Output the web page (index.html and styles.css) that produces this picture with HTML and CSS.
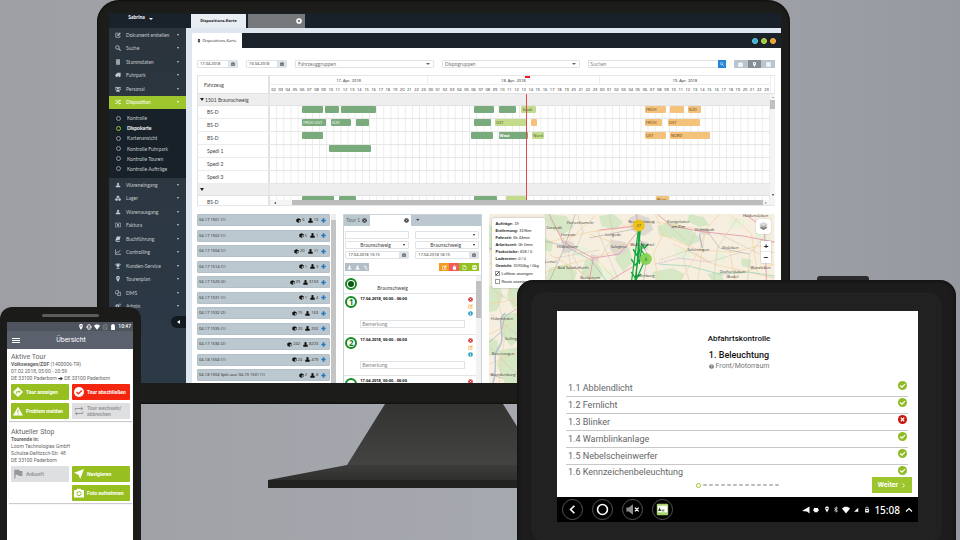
FILE: index.html
```html
<!DOCTYPE html>
<html lang="de">
<head>
<meta charset="utf-8">
<title>Dispositions-Karte</title>
<link rel="stylesheet" href="styles.css">
</head>
<body>
<svg class="defs" aria-hidden="true">
  <symbol id="edit" viewBox="0 0 16 16"><path d="M9 3H2v11h11V9" fill="none" stroke="currentColor" stroke-width="1.8"/><path d="M6 8l7-7 2.500 2.500-7 7H6z" fill="currentColor"/></symbol>
  <symbol id="search" viewBox="0 0 16 16"><circle cx="6.500" cy="6.500" r="4.700" fill="none" stroke="currentColor" stroke-width="2.200"/><path d="M10 10l5 5" stroke="currentColor" stroke-width="2.800"/></symbol>
  <symbol id="db" viewBox="0 0 16 16"><path d="M3 1h10v14H3z" fill="currentColor"/><path d="M4 4.500h8M4 8h8M4 11.500h8" stroke="#2c3640"/></symbol>
  <symbol id="truck" viewBox="0 0 16 16"><path d="M6 2h9v9H1V7l3-3h2z" fill="currentColor"/><circle cx="4.500" cy="12" r="2.200" fill="currentColor"/><circle cx="12" cy="12" r="2.200" fill="currentColor"/></symbol>
  <symbol id="users" viewBox="0 0 16 16"><g fill="currentColor"><circle cx="8" cy="5.500" r="3"/><circle cx="3" cy="4" r="2.200"/><circle cx="13" cy="4" r="2.200"/><path d="M3 15c0-8 10-8 10 0zM0 10c0-5 5-4 4 0zM16 10c0-5-5-4-4 0z"/></g></symbol>
  <symbol id="random" viewBox="0 0 16 16"><path d="M1 4h3l6 8h3M1 12h3l6-8h3" fill="none" stroke="currentColor" stroke-width="2.200"/><path d="M12 1l4 3-4 3zM12 9l4 3-4 3z" fill="currentColor"/></symbol>
  <symbol id="person" viewBox="0 0 16 16"><path d="M8 1l4 5h-2v4H6V6H4zM2 10h12v4H2z" fill="currentColor"/></symbol>
  <symbol id="weight" viewBox="0 0 16 16"><path d="M8 0a4 4 0 013 6v3h4v6H1V9h4V6a4 4 0 013-6z" fill="currentColor"/></symbol>
  <symbol id="cubes" viewBox="0 0 16 16"><path d="M8 1l4 2v4L8 9 4 7V3zM4 8l4 2v4l-4 2-4-2v-4zM12 8l4 2v4l-4 2-4-2v-4z" fill="currentColor" stroke="#2c3640" stroke-width=".8"/></symbol>
  <symbol id="money" viewBox="0 0 16 16"><path d="M1 3h14v10H1z" fill="none" stroke="currentColor" stroke-width="1.600"/><circle cx="8" cy="8" r="2.600" fill="currentColor"/></symbol>
  <symbol id="book" viewBox="0 0 16 16"><path d="M5 1h10l-3 10H4v2h9v2H3c-3-1-1-6 0-9z" fill="currentColor"/></symbol>
  <symbol id="chart" viewBox="0 0 16 16"><path d="M1 1v13h15M3 11l4-4 2 2 5-6" fill="none" stroke="currentColor" stroke-width="2"/></symbol>
  <symbol id="trophy" viewBox="0 0 16 16"><path d="M4 1h8v5c0 3-2 4-3 4v3h3v2H4v-2h3v-3C6 10 4 9 4 6z" fill="currentColor"/><path d="M4 3H1c0 3 1 4 4 5M12 3h3c0 3-1 4-4 5" fill="none" stroke="currentColor" stroke-width="1.300"/></symbol>
  <symbol id="pin" viewBox="0 0 16 16"><path d="M8 0c7 0 6 7 0 16C2 7 1 0 8 0zm0 3a2 2 0 100 4 2 2 0 000-4z" fill="currentColor"/></symbol>
  <symbol id="copy" viewBox="0 0 16 16"><path d="M1 4l3-3h5v9H1zM9 6h6v9H7v-5" fill="none" stroke="currentColor" stroke-width="1.700"/></symbol>
  <symbol id="cogs" viewBox="0 0 16 16"><circle cx="6" cy="8" r="3.500" fill="none" stroke="currentColor" stroke-width="3"/><circle cx="13" cy="4" r="2" fill="none" stroke="currentColor" stroke-width="1.600"/><circle cx="13" cy="12" r="2" fill="none" stroke="currentColor" stroke-width="1.600"/></symbol>
  <symbol id="cal" viewBox="0 0 16 16"><path d="M1 3h3V1h2v2h4V1h2v2h3v12H1z" fill="currentColor"/><path d="M3 7h10M3 10h10M6 6v8M10 6v8" stroke="#dde3e8"/></symbol>
  <symbol id="list" viewBox="0 0 16 16"><path d="M1 1h14v14H1z" fill="currentColor"/><path d="M3 6h10M3 10h10" stroke="#b9c5ce"/></symbol>
  <symbol id="box" viewBox="0 0 16 16"><path d="M8 1l7 3v8l-7 3-7-3V4z" fill="currentColor"/><path d="M9 8l5-2v5l-5 2z" fill="#bcc8d0"/></symbol>
  <symbol id="plus" viewBox="0 0 16 16"><path d="M8 1v14M1 8h14" stroke="currentColor" stroke-width="5"/></symbol>
  <symbol id="ring-x" viewBox="0 0 16 16"><circle cx="8" cy="8" r="7.500" fill="currentColor"/><path d="M5.500 5.500l5 5M10.500 5.500l-5 5" stroke="var(--hole, #fff)" stroke-width="3.200"/></symbol>
  <symbol id="info" viewBox="0 0 16 16"><circle cx="8" cy="8" r="7.500" fill="currentColor"/><path d="M8 3v2M8 7v6" stroke="#fff" stroke-width="2.400"/></symbol>
  <symbol id="help" viewBox="0 0 16 16"><circle cx="8" cy="8" r="7.500" fill="currentColor"/><path d="M5.500 6c0-3 5-3 5 0 0 2-2.500 1.500-2.500 4M8 11v2" fill="none" stroke="#fff" stroke-width="1.800"/></symbol>
  <symbol id="link" viewBox="0 0 16 16"><path d="M2 6l4-4 4 4-2 2M6 8l2-2 6 6-3 3-4-4" fill="none" stroke="currentColor" stroke-width="2.200"/></symbol>
  <symbol id="trash" viewBox="0 0 16 16"><path d="M2 3h4l1-2h2l1 2h4v2H2zM3 6h10v9H3z" fill="currentColor"/></symbol>
  <symbol id="file" viewBox="0 0 16 16"><path d="M3 1h6l4 4v10H3z" fill="none" stroke="currentColor" stroke-width="2"/><path d="M8 1v5h5" fill="currentColor"/></symbol>
  <symbol id="save" viewBox="0 0 16 16"><path d="M2 2h12v12H2z" fill="none" stroke="currentColor" stroke-width="2.400"/><path d="M5 2h6v4H5zM4 9h8v5H4z" fill="currentColor"/></symbol>
  <symbol id="ok" viewBox="0 0 16 16"><circle cx="8" cy="8" r="8" fill="currentColor"/><path d="M4 8l3 3 5.500-5.500" fill="none" stroke="#fff" stroke-width="2.200"/></symbol>
  <symbol id="bad" viewBox="0 0 16 16"><circle cx="8" cy="8" r="8" fill="currentColor"/><path d="M5 5l6 6M11 5l-6 6" stroke="#fff" stroke-width="2.200"/></symbol>
  <symbol id="wifi" viewBox="0 0 16 16"><path d="M0 5c4-5 12-5 16 0l-8 10z" fill="currentColor"/></symbol>
  <symbol id="signal" viewBox="0 0 16 16"><path d="M14 3v11H3z" fill="currentColor"/></symbol>
  <symbol id="nosim" viewBox="0 0 16 16"><path d="M3 5l4-3h6v12H3zM3 3l11 12" fill="none" stroke="currentColor" stroke-width="1.400"/></symbol>
  <symbol id="battery" viewBox="0 0 16 16"><path d="M6 0h4v2h3v14H3V2h3z" fill="currentColor"/></symbol>
  <symbol id="vibrate" viewBox="0 0 16 16"><path d="M5 2h6v12H5z" fill="none" stroke="currentColor" stroke-width="2"/><path d="M4 4L0 8l4 4zM12 4l4 4-4 4z" fill="currentColor"/></symbol>
  <symbol id="bt" viewBox="0 0 16 16"><path d="M3 4l9 8-4 3V1l4 3-9 8" fill="none" stroke="currentColor" stroke-width="1.800"/></symbol>
  <symbol id="lock" viewBox="0 0 16 16"><path d="M3 7h10v9H3z" fill="currentColor"/><path d="M5 7V2h6v5" fill="none" stroke="currentColor" stroke-width="1.600"/><path d="M6 9h4v3H6z" fill="#000"/></symbol>
  <symbol id="nav" viewBox="0 0 16 16"><path d="M16 0L10 16 7 9 0 6z" fill="currentColor"/></symbol>
  <symbol id="plane" viewBox="0 0 16 16"><path d="M15 1v14l-5-4-10-1z" fill="currentColor"/></symbol>
  <symbol id="android" viewBox="0 0 16 16"><path d="M3 3l2 1h6l2-1 1 4h1v5h-2l-1 3H4l-1-3H1V7h1z" fill="currentColor"/></symbol>
  <symbol id="turn" viewBox="0 0 16 16"><path d="M8 0l8 8-8 8-8-8z" fill="currentColor"/><path d="M6 11V7.500h4" fill="none" stroke="#97bf1f" stroke-width="1.600"/><path d="M9.500 5l3 2.500-3 2.500z" fill="#97bf1f"/></symbol>
  <symbol id="check" viewBox="0 0 16 16"><circle cx="8" cy="8" r="8" fill="currentColor"/><path d="M4 8l3 3 5.500-5.500" fill="none" stroke="#f5260f" stroke-width="2"/></symbol>
  <symbol id="warn" viewBox="0 0 16 16"><path d="M8 1l8 14H0z" fill="currentColor"/><path d="M8 6v4M8 11.500v1.800" stroke="#97bf1f" stroke-width="1.600"/></symbol>
  <symbol id="swap" viewBox="0 0 16 16"><path d="M2 7V4h10M14 9v3H4" fill="none" stroke="currentColor" stroke-width="1.500"/><path d="M11 1l4 3-4 3zM5 9l-4 3 4 3z" fill="currentColor"/></symbol>
  <symbol id="flag" viewBox="0 0 16 16"><path d="M2 1h8l1 2h4v8H9l-1-2H4v6H2z" fill="currentColor"/></symbol>
  <symbol id="camera" viewBox="0 0 16 16"><path d="M5 1h6l1 2h3l1 1v11H0V4l1-1h3z" fill="currentColor"/><circle cx="8" cy="9" r="3.300" fill="none" stroke="#97bf1f" stroke-width="1.500"/></symbol>
</svg>

<main class="stage">
  <svg class="stand" viewBox="0 0 360 86" aria-hidden="true">
    <defs>
      <linearGradient id="neck" x1="0" y1="0" x2="0" y2="1"><stop offset="0" stop-color="#333332"/><stop offset="1" stop-color="#434341"/></linearGradient>
      <linearGradient id="foot" x1="0" y1="0" x2="0" y2="1"><stop offset="0" stop-color="#3c3c3a"/><stop offset="1" stop-color="#2f2f2e"/></linearGradient>
    </defs>
    <path d="M117 0h118l38 61H79z" fill="url(#neck)"/>
    <path d="M79 61h194l79 15H0z" fill="url(#foot)"/>
    <path d="M0 76h352v8H0z" fill="#222221"/>
  </svg>

  <section class="monitor" aria-label="Disposition">
    <div class="desk">
      <aside class="side">
        <button class="user">Sabrina <i class="caret"></i></button>
        <ul class="menu" id="menu"></ul>
        <div class="collapse-row"><button class="collapse" aria-label="Menü einklappen"><i></i></button></div>
      </aside>
      <div class="work">
        <header class="tabs">
          <a class="tab on" href="#karte">Dispositions-Karte</a>
          <a class="tab" href="#neu" aria-label="Tab"><svg><use href="#ring-x"/></svg></a>
        </header>
        <div class="frame">
          <div class="subbar">
            <a class="subtab" href="#karte"><svg><use href="#pin"/></svg>Dispositions-Karte</a>
            <span class="dots"><i class="blue"></i><i class="lime"></i><i class="amber"></i></span>
          </div>
          <div class="content">
            <form class="filters">
              <span class="date"><input value="17.04.2018" aria-label="Von"><button type="button" aria-label="Kalender"><svg><use href="#cal"/></svg></button></span>
              <span class="date"><input value="19.04.2018" aria-label="Bis"><button type="button" aria-label="Kalender"><svg><use href="#cal"/></svg></button></span>
              <span class="pick"><select aria-label="Fahrzeuggruppen"><option>Fahrzeuggruppen</option></select></span>
              <span class="pick"><select aria-label="Dispogruppen"><option>Dispogruppen</option></select></span>
              <span class="find"><input placeholder="Suchen" aria-label="Suchen"><button type="button" aria-label="Suche starten"><svg><use href="#search"/></svg></button></span>
              <span class="views"><button type="button" aria-label="Kalender"><svg><use href="#cal"/></svg></button><button type="button" class="on" aria-label="Karte"><svg><use href="#pin"/></svg></button><button type="button" aria-label="Liste"><svg><use href="#list"/></svg></button></span>
            </form>

            <section class="gantt" id="gantt">
              <div class="g-head">
                <span class="g-name">Fahrzeug</span>
                <div class="g-time">
                  <div class="days"><span>17. Apr. 2018</span><span>18. Apr. 2018</span><span>19. Apr. 2018</span></div>
                  <div class="hours" id="hours"></div>
                </div>
                <span class="g-edge"></span>
              </div>
              <div class="g-body">
                <div class="g-rows" id="rows"></div>
                <div class="g-scroll"><i class="up"></i><b></b><i class="down"></i></div>
              </div>
              <div class="now-layer"><i class="now" id="now"></i></div>
              <div class="h-scroll"><i></i><b></b><i class="r"></i></div>
            </section>

            <div class="panels">
              <section class="orders"><ul id="orders"></ul><div class="v-scroll"></div></section>

              <section class="tour">
                <div class="t-tabs"><span>Tour 1 <svg><use href="#ring-x"/></svg></span><span class="on"><svg><use href="#ring-x"/></svg></span><button aria-label="Tour hinzufügen">+</button></div>
                <form class="t-form">
                  <input aria-label="Fahrer"><span class="pick dark"><select aria-label="Fahrzeug"><option></option></select></span>
                  <span class="pick dark mid"><select aria-label="Start"><option>Braunschweig</option></select></span>
                  <span class="pick dark mid"><select aria-label="Ziel"><option>Braunschweig</option></select></span>
                  <span class="date"><input value="17.04.2018 10:15" aria-label="Beginn"><button type="button" aria-label="Kalender"><svg><use href="#cal"/></svg></button></span>
                  <span class="date"><input value="17.04.2018 18:15" aria-label="Ende"><button type="button" aria-label="Kalender"><svg><use href="#cal"/></svg></button></span>
                </form>
                <div class="t-tools">
                  <span class="grp grey"><button aria-label="Laden"><svg><use href="#person"/></svg></button><button aria-label="Entladen"><svg><use href="#person"/></svg></button><button aria-label="Verknüpfen"><svg><use href="#link"/></svg></button></span>
                  <span class="grp"><button class="c1" aria-label="Bearbeiten"><svg><use href="#edit"/></svg></button><button class="c2" aria-label="Löschen"><svg><use href="#trash"/></svg></button><button class="c3" aria-label="Neu"><svg><use href="#file"/></svg></button><button class="c3" aria-label="Speichern"><svg><use href="#save"/></svg></button></span>
                </div>
                <div class="t-list">
                  <div class="stops">
                    <div class="stop first"><i class="num"></i><p>Braunschweig</p></div>
                    <div class="stop"><i class="num">1</i><div class="s-main"><b>17.04.2018, 00:00 - 06:00</b><input placeholder="Bemerkung" aria-label="Bemerkung 1"></div><div class="acts"><svg class="red"><use href="#ring-x"/></svg><svg class="org"><use href="#edit"/></svg><svg class="blu"><use href="#info"/></svg></div></div>
                    <div class="stop"><i class="num">2</i><div class="s-main"><b>17.04.2018, 00:00 - 06:00</b><input placeholder="Bemerkung" aria-label="Bemerkung 2"></div><div class="acts"><svg class="red"><use href="#ring-x"/></svg><svg class="org"><use href="#edit"/></svg><svg class="blu"><use href="#info"/></svg></div></div>
                    <div class="stop"><i class="num"></i><div class="s-main"><b>17.04.2018, 00:00 - 06:00</b></div><div class="acts"><svg class="red"><use href="#ring-x"/></svg></div></div>
                  </div>
                  <div class="s-scroll"><i></i><b></b></div>
                </div>
              </section>

              <section class="map">
                <svg class="land" viewBox="0 0 285 169" preserveAspectRatio="xMinYMin slice">
                  <rect width="285" height="169" fill="#f6efe0"/>
                  <g fill="#d5e7c4">
                    <path d="M55 0l22 2 8 10-10 8-16-6zM110 2l14-2 10 8-8 8-14-4zM168 12l14-4 20 8 10 10-12 6-16-8-14-2zM128 32l12 2 4 14-10 10-8-12zM60 54l18-4 10 8-4 12H56zM96 46l12 2 8 14-14 6-10-8zM200 0l14 3 6 8-10 2-12-6zM163 58l20-4 12 6-4 8h-24zM0 72l10-2 4 12-6 14-8 2zM20 70l14 4v14l-10 6-6-12zM14 100l20-2v24l-12 10-10-12zM0 124l8 2 4 12-12 4zM12 136l22-4v37H16l-8-18zM0 10l5 4v20l-5 4zM56 24l8 4-2 10-8-2zM252 44l10 2-2 8-8-2zM218 60l14-2 2 8h-12z"/>
                  </g>
                  <g fill="#e8f1d9"><path d="M84 30l14 4-4 10-12-4zM186 34l16 2-2 10-14-2zM240 4l16 2-4 8-12-2zM112 54l16 4 2 10h-16zM264 14l14 2 4 14-14-2zM226 38l10 2v8l-10-2z"/></g>
                  <g fill="#ddd8d2"><path d="M140 4l8-4 12 4 4 12-10 6-12-6zM122 26l14 2 2 10-12 4-6-8zM72 26l12 2 2 8-12 4zM210 14l10 1v6l-10-1zM148 26l10 2v8l-10-2zM102 40l8 2-1 6-8-1z"/></g>
                  <g fill="none" stroke="#f5d3a0" stroke-width=".7">
                    <path d="M0 50l60-22 40-10 50-6M76 30l30-28M60 40l50 28M108 46l20 22M100 20l28 10 30 2M166 0l8 20-10 20 6 28M170 20l40 16 34 2 41-10M190 68l20-32 6-20 14-16M216 16l-8 52M240 36l6 32M245 60l40-10M132 12l34-4 50 8M240 0l22 20 6 40M184 30l40 20 61 14M52 60l28-10 24-6 30-10M0 90l34-6M0 120l34-16M10 169l6-50-8-40M0 150l34-14M20 70l10 40"/>
                  </g>
                  <g fill="none" stroke="#d3c3b5" stroke-width=".5">
                    <path d="M60 4l18 26 6 38M88 0l6 18-10 24 12 26M120 0l4 22-12 20M170 46l30-10 20 12 32-10M200 68l-6-24 14-30M224 68l4-34 20-30M258 68l2-28 20-24M176 8l20 18M108 16l22 52M66 44l44-8M230 20l40 20 15-2M4 76l26 16M2 100l28 22M0 132l30 30"/>
                  </g>
                  <g fill="none" stroke="#e79aae" stroke-width=".9">
                    <path d="M60 0l14 28 30 16 26-4 20-24M168 0l14 12 34 6 38 4 31 6M104 44l-4 24M147 0l2 14M255 0l20 14 2 54M0 34l5 2M110 16l38-4M118 68l30-18 6-20"/>
                  </g>
                  <g fill="none" stroke="#9b9ba3" stroke-width=".5">
                    <path d="M52 26l24 6 26 14 16 22M100 24l50-10M148 20l10 20-4 28M216 14l14 20 30 6M60 68l16-36 10-32M0 128l12-10 4-16 16-10M0 160l14 4"/>
                  </g>
                  <path d="M170 50l30 2 30 8 30-2 25 4" fill="none" stroke="#9fd4bd" stroke-width=".8"/>
                  <path d="M166 50l24-6 30 4" fill="none" stroke="#d792d8" stroke-width=".6" stroke-dasharray="2 1"/>
                  <path d="M4 169c6-20-2-26 6-36s-4-26 6-34M210 20l3 14" fill="none" stroke="#b4bfd8" stroke-width="1.500"/>
                  <g fill="none" stroke="#0fa83c" stroke-width="1.200">
                    <path d="M149 17l-8 60M150 17l-4 60M151 17l-6 60M151 32l-7 45M156 45l-14 32M153 30l-3 20M152 36l6 9"/>
                    <path d="M144 35l3 6 4-6M142 45l4 6 5-6M152 29l3 5 4-4M142 58l4 6 6-4" stroke-width="1.400"/>
                  </g>
                  <g class="places">
                    <text x="91" y="10">Hohenhameln</text><text x="65" y="15">Sarstedt</text><text x="79" y="22">Harsum</text><text x="124" y="22">Lengede</text><text x="78" y="34">Hildesheim</text><text x="130" y="34">Salzgitter</text><text x="61" y="49">(Leine)</text><text x="84" y="55">Bad Salzdetfurth</text><text x="101" y="65">Bockenem</text><text x="152" y="9">Braunschweig</text><text x="189" y="9">Königslutter</text><text x="189" y="14">am Elm</text><text x="215" y="17">Helmstedt</text><text x="209" y="37">Schöningen</text><text x="241" y="35">Eilsleben</text><text x="243" y="59">Oschersleben</text><text x="243" y="64">(Bode)</text><text x="271" y="55">Wanzleben</text><text x="266" y="3">Haldensleben</text><text x="153" y="32">Wolfenbüttel</text><text x="156" y="63">Hornburg</text><text x="13" y="106">Holzminden</text><text x="22" y="126">Solling</text><text x="14" y="141">Beverungen</text><text x="14" y="162">Brandenburg</text>
                  </g>
                  <circle cx="149.500" cy="11.500" r="6" fill="#f0c20c" opacity=".9"/>
                  <circle cx="156.500" cy="45" r="6" fill="#7fd14d" opacity=".9"/>
                  <g class="places n"><text x="149.500" y="13">27</text><text x="156.500" y="46.500">3</text></g>
                </svg>
                <div class="info">
                  <p><b>Aufträge:</b> 19</p><p><b>Entfernung:</b> 319km</p><p><b>Fahrzeit:</b> 6h 44min</p><p><b>Arbeitszeit:</b> 0h 0min</p><p><b>Packstücke:</b> 658 / 0</p><p><b>Lademeter:</b> 0 / 0</p><p><b>Gewicht:</b> 31950kg / 0kg</p>
                  <label><input type="checkbox" checked>Luftlinie anzeigen</label>
                  <label><input type="checkbox">Route anzeigen</label>
                </div>
                <div class="ctrl">
                  <button class="layers" aria-label="Ebenen"><svg viewBox="0 0 16 16"><path d="M8 7l7 3-7 4-7-4z" fill="#777"/><path d="M8 4l7 3-7 4-7-4z" fill="#aaa"/><path d="M8 1l7 3-7 4-7-4z" fill="#ddd" stroke="#999" stroke-width=".5"/></svg></button>
                  <span class="zoom"><button>+</button><button>−</button></span>
                </div>
              </section>
            </div>
          </div>
        </div>
      </div>
    </div>
  </section>

  <section class="phone" aria-label="Übersicht">
    <i class="speaker"></i>
    <div class="p-screen">
      <div class="p-status"><svg><use href="#pin"/></svg><svg><use href="#vibrate"/></svg><svg><use href="#wifi"/></svg><svg class="dim"><use href="#nosim"/></svg><svg><use href="#battery"/></svg><b>10:47</b></div>
      <header class="p-bar"><button aria-label="Menü"><i></i><i></i><i></i></button><h1>Übersicht</h1></header>
      <article class="card">
        <h2>Aktive Tour</h2>
        <p><b>Volkswagen/ZDF</b> (1400006-TR)</p><p>07.02 2018, 05:00 - 20:59</p><p>DE 33100 Paderborn <svg class="arrow" viewBox="0 0 16 16"><path d="M1 6h7V2l8 6-8 6v-4H1z" fill="#333"/></svg> DE 33100 Paderborn</p>
        <div class="btns">
          <button><svg><use href="#turn"/></svg>Tour anzeigen</button>
          <button class="stopb"><svg><use href="#check"/></svg>Tour abschließen</button>
          <button><svg><use href="#warn"/></svg>Problem melden</button>
          <button class="off"><svg><use href="#swap"/></svg>Tour wechseln/<br>abbrechen</button>
        </div>
      </article>
      <article class="card">
        <h2>Aktueller Stop</h2>
        <p><b>Tourende in:</b></p><p>Loom Technologies GmbH</p><p>Schulze-Delitzsch-Str. 48</p><p>DE 33100 Paderborn</p>
        <div class="btns">
          <button class="off"><svg><use href="#flag"/></svg>Ankunft</button>
          <button><svg><use href="#nav"/></svg>Navigieren</button>
          <button class="second"><svg><use href="#camera"/></svg>Foto aufnehmen</button>
        </div>
      </article>
    </div>
  </section>

  <section class="tablet" aria-label="Abfahrtskontrolle">
    <i class="knob"></i>
    <div class="shell">
      <div class="t-screen">
        <div class="page">
          <h2>Abfahrtskontrolle</h2>
          <h3>1. Beleuchtung</h3>
          <p class="where"><svg><use href="#help"/></svg>Front/Motorraum</p>
          <ul class="checks">
            <li>1.1 Abblendlicht<svg><use href="#ok"/></svg></li>
            <li>1.2 Fernlicht<svg><use href="#ok"/></svg></li>
            <li>1.3 Blinker<svg class="no"><use href="#bad"/></svg></li>
            <li>1.4 Warnblinkanlage<svg><use href="#ok"/></svg></li>
            <li>1.5 Nebelscheinwerfer<svg><use href="#ok"/></svg></li>
            <li>1.6 Kennzeichenbeleuchtung<svg><use href="#ok"/></svg></li>
          </ul>
          <footer class="next">
            <span class="steps" id="steps"></span>
            <button>Weiter <svg viewBox="0 0 8 8"><path d="M2.500 1l3 3-3 3" fill="none" stroke="currentColor" stroke-width="1.400"/></svg></button>
          </footer>
        </div>
        <nav class="sys">
          <button aria-label="Zurück"><svg viewBox="0 0 20 20"><path d="M12 6l-4 4 4 4" fill="none" stroke="#fff" stroke-width="1.700"/></svg></button>
          <button aria-label="Startseite"><svg viewBox="0 0 20 20"><circle cx="10" cy="10" r="5.200" fill="none" stroke="#fff" stroke-width="1.700"/></svg></button>
          <button aria-label="Stumm"><svg viewBox="0 0 20 20"><path d="M3.500 8H6l4.500-3.500v11L6 12H3.500z" fill="#8c8c8c"/><path d="M12.500 8l4 4M16.500 8l-4 4" stroke="#fff" stroke-width="1.400"/></svg></button>
          <button aria-label="App"><svg viewBox="0 0 20 20"><rect x="4" y="4" width="12" height="12" rx="1" fill="#a8d06a"/><path d="M5 6h10v7H5z" fill="#fff"/><path d="M5.500 11.500l1.500-4 1.500 4z" fill="#333"/><path d="M9 10h3v2H9z" fill="#7a9a5a"/></svg></button>
          <span class="tray"><svg class="big"><use href="#plane"/></svg><svg class="gap"><use href="#android"/></svg><svg><use href="#pin"/></svg><svg><use href="#bt"/></svg><svg class="big"><use href="#wifi"/></svg><svg class="gap"><use href="#signal"/></svg><svg><use href="#lock"/></svg><time>15:08</time><svg class="big" viewBox="0 0 8 8"><path d="M1 5.500l3-3 3 3" fill="none" stroke="#fff" stroke-width="1.200"/></svg></span>
        </nav>
      </div>
    </div>
  </section>
</main>
<script src="app.js"></script>
</body>
</html>
```
FILE: styles.css
```css
* { box-sizing: border-box; }
html, body { height: 100%; }
body { margin: 0; overflow: hidden; font-family: "Open Sans", "Noto Sans", sans-serif; font-size: 4px; line-height: 6px; color: #222; }
ul, p, h1, h2, h3 { margin: 0; padding: 0; list-style: none; font-weight: 400; }
button, input, select { font: inherit; color: inherit; margin: 0; padding: 0; border: 0; background: none; border-radius: 0; min-width: 0; outline: 0; }
button { display: flex; align-items: center; justify-content: center; }
a { color: inherit; text-decoration: none; }
i { font-style: normal; }
svg { display: block; width: 6px; height: 6px; flex: none; }
.defs { position: absolute; width: 0; height: 0; }

/* devices on the backdrop */
.stage { position: relative; height: 100%; overflow: hidden; background: linear-gradient(90deg, #9d9fa4, #a6a9af 55%, #96999f); }
.stand { position: absolute; left: 268px; top: 404px; width: 360px; height: 86px; }
.monitor { position: absolute; left: 97px; right: 170px; top: 0; height: 404px; padding: 13px 9px 21px 12px; background: #1c1c1b; border-radius: 22px; box-shadow: inset 0 0 3px #000; }
.phone { position: absolute; left: 0; top: 307px; bottom: -20px; width: 141px; padding: 7px 8px 0 7px; background: #1b1b1a; border-radius: 12px; }
.tablet { position: absolute; left: 517px; right: 4px; top: 280px; bottom: -20px; }

/* desktop app */
.desk { height: 100%; display: flex; overflow: hidden; background: #fff; }
.side { width: 77px; flex: none; background: linear-gradient(#2b343d, #2c3a47); color: #c3c8cc; font: 5px/6px Lato, sans-serif; font-weight: 700; }
.user { width: 100%; height: 15px; padding-bottom: 8px; background: #19222b; color: #fff; font-weight: 700; gap: 4px; padding-right: 14px; }
.caret { border: 2px solid transparent; border-top-color: currentColor; border-bottom: 0; margin-top: 4px; }
.menu { height: 285px; display: flex; flex-direction: column; }
.menu > li { flex: 1; display: flex; }
.menu a { flex: 1; display: flex; align-items: center; gap: 5px; padding: 0 7px 0 6px; }
.menu > li > a::after { content: ""; margin-left: auto; border: 1px solid transparent; border-top: 2px solid currentColor; border-bottom: 0; }
.menu .cur { background: #9dc62d; color: #fff; }
.menu > .sub { flex: none; height: 69px; background: #18212a; padding: 4px 0; display: block; }
.sub ul { height: 61px; display: flex; flex-direction: column; font-weight: 400; }
.sub li { flex: 1; display: flex; }
.sub li::before { content: ""; border: 1px solid #8d959b; border-radius: 50%; width: 3px; height: 3px; align-self: center; margin-left: 7px; }
.sub .sel { color: #fff; font-weight: 700; }
.sub .sel::before { border-color: #9dc62d; }
.collapse-row { display: flex; justify-content: flex-end; padding-top: 3px; }
.collapse { width: 15px; height: 12px; border-radius: 6px 0 0 6px; background: #12191f; }
.collapse i { border: 2px solid transparent; border-right: 3px solid #fff; border-left: 0; }

.work { flex: 1; min-width: 0; display: flex; flex-direction: column; background: #dfe6ef; }
.tabs { height: 15px; flex: none; display: flex; gap: 2px; padding: 1px 0 0 5px; background: #18212a; --hole: #76787c; }
.tab { width: 57px; display: flex; align-items: center; justify-content: flex-end; background: #76787c; color: #fff; padding-right: 3px; }
.tab.on { width: 55px; justify-content: center; background: #e9eef5; color: #222; font-weight: 700; padding: 0; }
.frame { flex: 1; min-height: 0; display: flex; flex-direction: column; margin: 5px 0 0 6px; background: #fff; }
.subbar { height: 15px; flex: none; display: flex; background: #1b2229; justify-content: space-between; align-items: stretch; }
.subtab { width: 50px; display: flex; align-items: center; justify-content: center; background: #fff; color: #222; gap: 1px; }
.subtab svg { width: 4px; height: 4px; }
.dots { display: flex; align-items: center; gap: 3px; padding-right: 5px; }
.dots i { width: 6px; height: 6px; border-radius: 50%; background: #32afd3; border: 1px solid #6fd0ea; }
.dots .lime { background: #9dc62d; border-color: #c5e26d; }
.dots .amber { background: #f39c1f; border-color: #f8bd57; }
.content { flex: 1; min-height: 0; display: flex; flex-direction: column; padding: 12px 6px 0 5px; }

.filters { display: flex; gap: 8px; height: 8px; flex: none; margin-bottom: 7px; }
.date { display: flex; width: 41px; border: 1px solid #dfe3e6; border-radius: 1px; }
.date input { flex: 1; padding-left: 2px; color: #222; }
.date button { width: 9px; background: #dde3e8; color: #4b5258; }
.date svg { width: 4px; height: 4px; }
.pick { flex: 1; display: flex; align-items: center; border: 1px solid #dfe3e6; border-radius: 1px; min-width: 0; }
.pick select { flex: 1; appearance: none; padding-left: 2px; color: #777; height: 100%; }
.pick select, .find input, .s-main input, .stop.first p { font: 5px/6px Lato, sans-serif; }
.pick::after { content: ""; border: 2px solid transparent; border-top-color: #666; border-bottom: 0; margin-right: 3px; }
.pick.dark::after { border-width: 1px; border-top: 2px solid #222; }
.pick.dark select { color: #444; }
.find { flex: 1; display: flex; border: 1px solid #dfe3e6; border-right: 0; }
.find input { flex: 1; padding-left: 1px; }
.find button { width: 8px; background: #2584d8; color: #fff; margin: -1px 0; }
.find svg { width: 4px; height: 4px; }
::placeholder { color: #888; opacity: 1; }
.views { width: 41px; display: flex; }
.views button { flex: 1; background: #b9c5ce; color: #fff; }
.views .on { background: #848e96; }
.views svg { width: 5px; height: 5px; }

.gantt { position: relative; height: 131px; flex: none; display: flex; flex-direction: column; border: 1px solid #e6e6e6; border-width: 1px 0; margin-bottom: 8px; }
.g-head { display: flex; height: 18px; border-bottom: 1px solid #e2e2e2; }
.g-name { width: 73px; flex: none; border: 1px solid #e2e2e2; border-width: 0 2px 0 1px; display: flex; align-items: center; padding-left: 6px; font: 5px/6px Lato, sans-serif; color: #444; }
.g-time { flex: 1; min-width: 0; }
.days { display: grid; grid-template-columns: 22fr 24fr 24fr; height: 9px; text-align: center; border-bottom: 1px solid #eee; line-height: 9px; }
.days span + span { border-left: 1px solid #eee; }
.hours { display: grid; grid-template-columns: repeat(70, minmax(0, 1fr)); line-height: 9px; }
.hours span { display: flex; justify-content: center; }
.g-edge { width: 5px; border: 1px solid #eee; border-width: 0 1px; }
.g-body { flex: 1; min-height: 0; display: flex; overflow: hidden; }
.g-rows { flex: 1; min-width: 0; }
.g-row { display: flex; height: 13px; }
.g-row .g-name { padding-left: 9px; border-bottom: 1px solid #ececec; }
.g-row.group { height: 12px; background: #eee; border-bottom: 1px solid #e2e2e2; }
.g-row.group .g-name { padding-left: 2px; border-color: #e6e6e6; border-bottom: 0; gap: 1px; }
.g-name i { border: 2px solid transparent; border-top: 3px solid #222; border-bottom: 0; }
.track { position: relative; flex: 1; border-bottom: 1px solid #e6e6e6; background: linear-gradient(90deg, transparent calc(100% - 1px), #ebebeb 0) 0 0 / calc(100% / 70) 100%; }
.group .track { background: none; border: 0; }
.bar { position: absolute; top: 0; height: 7px; border-radius: 1px; background: #7aab7c; color: #fff; line-height: 7px; padding-left: 1px; white-space: nowrap; }
.bar.l { background: #c3dc8c; color: #47552c; }
.bar.o { background: #f4c27a; color: #553d1a; }
.bar.w { font-weight: 700; }
.g-scroll { width: 5px; flex: none; display: flex; flex-direction: column; align-items: center; background: #f4f4f4; padding: 2px 0 8px; }
.g-scroll b { width: 5px; height: 9px; background: #c1c1c1; margin-top: 2px; }
.g-scroll i { border: 1px solid transparent; }
.g-scroll .up { border-bottom-color: #777; }
.g-scroll .down { border-top: 2px solid #333; margin-top: auto; }
.h-scroll { position: absolute; left: 73px; right: 5px; bottom: 0; height: 5px; display: flex; align-items: center; background: #f4f4f4; padding: 0 3px; }
.h-scroll b { flex: 1; height: 5px; margin: 0 2px 0 16px; background: #bdbdbd; }
.h-scroll i { border: 1px solid transparent; border-right: 2px solid #333; }
.h-scroll .r { border-right: 0; border-left: 2px solid #999; }
.now-layer { position: absolute; inset: 0 5px 5px 73px; pointer-events: none; }
.now { position: absolute; top: 18px; bottom: 0; width: 1px; background: #e04a4a; }
.now::before { content: ""; position: absolute; left: -1px; top: -18px; border: 2px solid #f01818; border-width: 2px 1px 0; width: 3px; }

.panels { flex: 1; min-height: 0; display: grid; grid-template-columns: 139fr 139fr 285fr; grid-template-rows: minmax(0, 1fr); gap: 7px; }
.orders { display: flex; gap: 1px; min-width: 0; }
.orders ul { flex: 1; display: flex; flex-direction: column; justify-content: space-between; padding-bottom: 2px; }
.orders li { height: 12px; display: flex; align-items: center; padding: 0 3px 0 1px; background: #bcc8d0; border-radius: 1px; border: 1px solid #b3c0c9; }
.orders li span { display: flex; align-items: center; gap: 1px; margin-left: 3px; }
.orders li span:first-of-type { margin-left: auto; }
.orders svg { width: 5px; height: 5px; color: #111; }
.orders li > svg { margin-left: 3px; color: #2277be; }
.v-scroll { width: 5px; background: #c4c4c4; border-top: 6px solid #eee; }

.tour { display: flex; flex-direction: column; border: 1px solid #ccd4da; border-bottom: 0; min-width: 0; overflow: hidden; }
.t-tabs { display: flex; height: 12px; flex: none; background: #bcc8d0; margin: -1px -1px 0; --hole: #bcc8d0; }
.t-tabs span { width: 27px; display: flex; align-items: center; justify-content: center; gap: 2px; font: 5px/6px Lato, sans-serif; color: #666; }
.t-tabs svg { width: 5px; height: 5px; color: #444; }
.t-tabs .on { width: 41px; background: #fff; justify-content: flex-end; padding-right: 2px; }
.t-tabs button { width: 13px; font-size: 6px; font-weight: 700; }
.t-form { display: grid; grid-template-columns: minmax(0, 1fr) minmax(0, 1fr); grid-auto-rows: 8px; gap: 2px 6px; padding: 5px 2px 0 1px; }
.t-form > input { border: 1px solid #dfe3e6; }
.t-form .date { width: auto; }
.mid select { padding-left: 14px; }
.t-tools { display: flex; justify-content: space-between; padding: 4px 2px 4px 1px; border-bottom: 1px solid #dde2e6; }
.grp { display: flex; height: 8px; }
.grp button { width: 10px; color: #fff; }
.grp.grey button { width: 8px; background: #b3bfc8; }
.grp svg { width: 5px; height: 5px; }
.grp .c1 { background: #f39c1f; } .grp .c2 { background: #f05a5a; } .grp .c3 { background: #93bf1f; }
.t-list { flex: 1; min-height: 0; display: flex; overflow: hidden; }
.stops { flex: 1; min-width: 0; }
.stop { display: flex; height: 41px; padding: 2px 3px 0 1px; gap: 3px; border-bottom: 1px solid #e2e5e8; }
.stop.first { height: 18px; }
.stop.first p { align-self: flex-end; padding: 0 0 2px 17px; color: #444; }
.stop.first .num::before { content: ""; width: 6px; height: 6px; border-radius: 50%; background: #0a5a12; }
.num { width: 12px; height: 12px; flex: none; border: 2px solid #178a20; border-radius: 50%; display: flex; align-items: center; justify-content: center; color: #167a1e; font: 700 8px/8px "Open Sans", sans-serif; }
.s-main { flex: 1; min-width: 0; color: #111; display: flex; flex-direction: column; }
.s-main b { line-height: 6px; height: 24px; font-weight: 700; white-space: nowrap; }
.s-main input { height: 8px; border: 1px solid #dfe3e6; padding-left: 1px; }
.acts { display: flex; flex-direction: column; gap: 2px; padding-top: 1px; }
.acts svg { width: 5px; height: 5px; }
.red { color: #d5323a; } .org { color: #f0a63a; } .blu { color: #2a9fc4; }
.s-scroll { width: 5px; background: #f2f2f2; flex: none; padding-top: 1px; }
.s-scroll i { display: block; height: 4px; }
.s-scroll b { display: block; height: 37px; background: #c1c1c1; }

.map { position: relative; overflow: hidden; min-width: 0; }
.land { width: 100%; height: 100%; }
.places { font: 4px "Open Sans", sans-serif; fill: #3f3b3a; text-anchor: middle; }
.info { position: absolute; left: 3px; top: 4px; width: 53px; padding: 2px 3px 3px; background: #fff; border-radius: 2px; box-shadow: 0 0 2px #999; color: #222; font: 4px/7px "Liberation Sans", sans-serif; }
.info b { font-weight: 700; }
.info p { white-space: nowrap; }
.info label { display: flex; align-items: center; gap: 1px; height: 8px; white-space: nowrap; }
.info input { appearance: none; width: 5px; height: 5px; border: 1px solid #999; }
.info input:checked { background: linear-gradient(135deg, #fff 40%, #555 40% 65%, #fff 65%); }
.ctrl { position: absolute; right: 4px; top: 5px; display: flex; flex-direction: column; align-items: flex-end; gap: 7px; }
.ctrl button { background: #fff; box-shadow: 0 0 1px #888; }
.layers { width: 15px; height: 15px; border-radius: 2px; }
.layers svg { width: 9px; height: 9px; }
.zoom button { width: 10px; height: 11px; font: 700 8px/8px "Liberation Sans", sans-serif; color: #222; }

/* phone */
.speaker { display: block; width: 57px; height: 3px; margin: 0 auto 5px; border-radius: 2px; background: #5c5c5b; }
.p-screen { height: 100%; background: #fff; font: 5px/7px Roboto, sans-serif; color: #666; }
.p-status { height: 9px; display: flex; align-items: center; justify-content: flex-end; gap: 2px; padding-right: 2px; background: #4e535e; color: #fff; }
.p-status svg { width: 6px; height: 6px; }
.p-status .dim { color: #a0a4ab; }
.p-status b { font-weight: 500; }
.p-bar { height: 18px; background: #5a606c; display: flex; align-items: center; color: #fff; padding: 0 5px; }
.p-bar button { flex-direction: column; gap: 1px; }
.p-bar i { width: 8px; height: 1px; background: #fff; }
.p-bar h1 { flex: 1; text-align: center; font-size: 7px; padding-right: 6px; }
.card { margin: 0 1px 3px 2px; padding: 4px 2px 2px; box-shadow: 0 1px 1px #ccc; }
.card h2 { font-size: 7px; line-height: 8px; }
.card p { white-space: nowrap; }
.card b { font-weight: 700; }
.arrow { display: inline-block; width: 5px; height: 5px; vertical-align: -1px; }
.btns { display: grid; grid-template-columns: minmax(0, 1fr) minmax(0, 1fr); grid-auto-rows: 16px; gap: 3px; padding-top: 2px; }
.btns button { justify-content: flex-start; gap: 3px; padding-left: 2px; background: #97bf1f; color: #fff; font-weight: 700; line-height: 6px; text-align: left; white-space: nowrap; border-radius: 1px; }
.btns svg { width: 10px; height: 10px; }
.btns .stopb { background: #f5260f; }
.btns .off { background: #dedfe0; color: #96989b; }
.btns .second { grid-column: 2; }

/* tablet */
.knob { position: absolute; right: 87px; top: -4px; width: 52px; height: 8px; border-radius: 3px; background: #2a2a2a; }
.shell { position: relative; height: 100%; padding: 31px 38px 38px 40px; border-radius: 16px; background: #1c1c1c; box-shadow: inset 0 0 4px #0b0b0b; }
.shell::before { content: ""; position: absolute; inset: 14px 16px 20px 16px; border-radius: 10px; background: #212121; box-shadow: 0 0 3px #303030; }
.t-screen { position: relative; height: 100%; display: flex; flex-direction: column; font-family: Roboto, sans-serif; background: #fff; }
.page { flex: 1; min-height: 0; padding: 23px 6px 0 9px; display: flex; flex-direction: column; color: #111; }
.page h2 { font-size: 8px; line-height: 10px; text-align: center; font-weight: 500; margin-bottom: 5px; }
.page h3 { font-size: 9px; line-height: 12px; text-align: center; font-weight: 500; }
.where { display: flex; align-items: center; justify-content: center; gap: 2px; font-size: 7px; line-height: 10px; color: #777; }
.where svg { width: 5px; height: 5px; }
.checks { margin: 9px 4px 0 0; font-size: 9px; color: #666; }
.checks li { display: flex; justify-content: space-between; height: 17px; padding: 0 1px 0 2px; line-height: 17px; border-bottom: 1px solid #c8c8c8; }
.checks li:last-child { border: 0; height: 12px; line-height: 15px; }
.checks svg { width: 9px; height: 9px; margin-top: 1px; color: #8fbc26; }
.checks .no { color: #c9160c; }
.next { display: flex; justify-content: flex-end; align-items: center; }
.steps { display: flex; align-items: center; gap: 2px; margin-right: auto; padding-left: 130px; }
.steps i { width: 4px; height: 2px; background: #bbb; border-radius: 1px; }
.steps i:first-child { width: 5px; height: 5px; border: 1px solid #9dc62d; border-radius: 50%; background: #fff; }
.next button { width: 40px; height: 16px; background: #9dc62d; color: #fff; font-size: 7px; font-weight: 700; gap: 3px; }
.next svg { width: 5px; height: 5px; }
.sys { height: 25px; flex: none; background: #000; display: flex; align-items: center; gap: 9px; padding: 0 5px; color: #fff; }
.sys button { width: 21px; height: 21px; border: 1px solid #555; border-radius: 50%; }
.sys button svg { width: 19px; height: 19px; }
.tray { margin-left: auto; display: flex; align-items: center; gap: 3px; }
.tray svg { width: 6px; height: 7px; }
.tray .big { width: 8px; height: 8px; }
.tray .gap { margin-right: 2px; }
.tray time { font: 500 10px/12px "Noto Sans", sans-serif; padding: 0 2px 0 1px; }
```
FILE: app.js
```js
const icon = n => `<svg><use href="#${n}"/></svg>`;

const menu = [["edit", "Dokument erstellen"], ["search", "Suche"], ["db", "Stammdaten"], ["truck", "Fuhrpark"], ["users", "Personal"], ["random", "Disposition"],
  ["person", "Wareneingang"], ["cubes", "Lager"], ["person", "Warenausgang"], ["money", "Faktura"], ["book", "Buchführung"], ["chart", "Controlling"], ["trophy", "Kunden-Service"], ["pin", "Tourenplan"], ["copy", "DMS"], ["cogs", "Admin"]];
const sub = ["Kontrolle", "Dispokarte", "Kartenansicht", "Kontrolle Fuhrpark", "Kontrolle Touren", "Kontrolle Aufträge"];
document.getElementById("menu").innerHTML = menu.map(([i, t]) => {
  const cur = t === "Disposition";
  const item = `<li class="${cur ? "cur" : ""}"><a href="#">${icon(i)}${t}</a></li>`;
  return cur ? item + `<li class="sub"><ul>${sub.map((s, k) => `<li class="${k === 1 ? "sel" : ""}"><a href="#">${s}</a></li>`).join("")}</ul></li>` : item;
}).join("");

/* hours are counted from 17 Apr 02:00 */
const HOURS = 70;
document.getElementById("hours").innerHTML = Array.from({ length: HOURS }, (_, h) => `<span>${String((h + 2) % 24).padStart(2, "0")}</span>`).join("");
const rows = [
  ["▼1501 Braunschweig"],
  ["BS-D", [4.5, 7.4], [7.7, 9.6], [10, 14.9], [28.5, 31.4], [32, 34.4], [35.2, 37.2, "l", "Stadt"], [52.5, 55.4, "o", "FRÜH"], [56, 57.9, "o"], [58.5, 60.4, "o", "SÜD"]],
  ["BS-D", [4.5, 7.9, "", "FRÜH OST"], [8.5, 11.4, "", "SÜD"], [12, 13.9], [28.5, 30.9], [31.5, 35.8, "l", "OST"], [36.5, 37.4, "o"], [52.5, 54.9, "o", "FRÜH"], [55.7, 60.2, "o", "OST"]],
  ["BS-D", [4.5, 7.4], [28.2, 31.2], [32, 36.1, "w", "West"], [36.7, 38.4, "l", "Nord"], [52.5, 55.4, "o", "OST"], [56, 61.6, "o", "NORD"]],
  ["Spedi 1", [8.2, 14.2]],
  ["Spedi 2"], ["Spedi 3"],
  ["▼"],
  ["BS-D", [4.5, 8.9], [9.7, 12], [28.5, 31.8], [33, 35.8, "l"], [54, 55.9, "o", "West"]]
];
document.getElementById("rows").innerHTML = rows.map(([name, ...bars]) => {
  const group = name[0] === "▼";
  return `<div class="g-row ${group ? "group" : ""}"><span class="g-name">${group ? `<i></i>${name.slice(1)}` : name}</span><div class="track">${bars.map(([a, b, c = "", t = ""]) =>
    `<span class="bar ${c}" style="left:${a / HOURS * 100}%;width:${(b - a) / HOURS * 100}%">${t}</span>`).join("")}</div></div>`;
}).join("");
document.getElementById("now").style.left = 35.8 / HOURS * 100 + "%";

const orders = [["04-17 1501 (1)", 6, 13], ["04-17 1502 (1)", 5, 1], ["04-17 1504 (1)", 20, 11], ["04-17 1514 (1)", 1, 3], ["04-17 1520 (2)", 39, 3153], ["04-17 1531 (1)", 1, 4], ["04-17 1532 (2)", 75, 163], ["04-17 1535 (1)", 20, 202], ["04-17 1536 (2)", 242, 8223], ["04-18 1504 (1)", 24, 479], ["04-18 1504 Split aus: 04-19 1531 (1)", 2, 8]];
document.getElementById("orders").innerHTML = orders.map(([n, a, b]) => `<li>${n}<span>${icon("box")}${a}</span><span>${icon("weight")}${b}</span>${icon("plus")}</li>`).join("");

document.getElementById("steps").innerHTML = "<i></i>".repeat(14);
```
